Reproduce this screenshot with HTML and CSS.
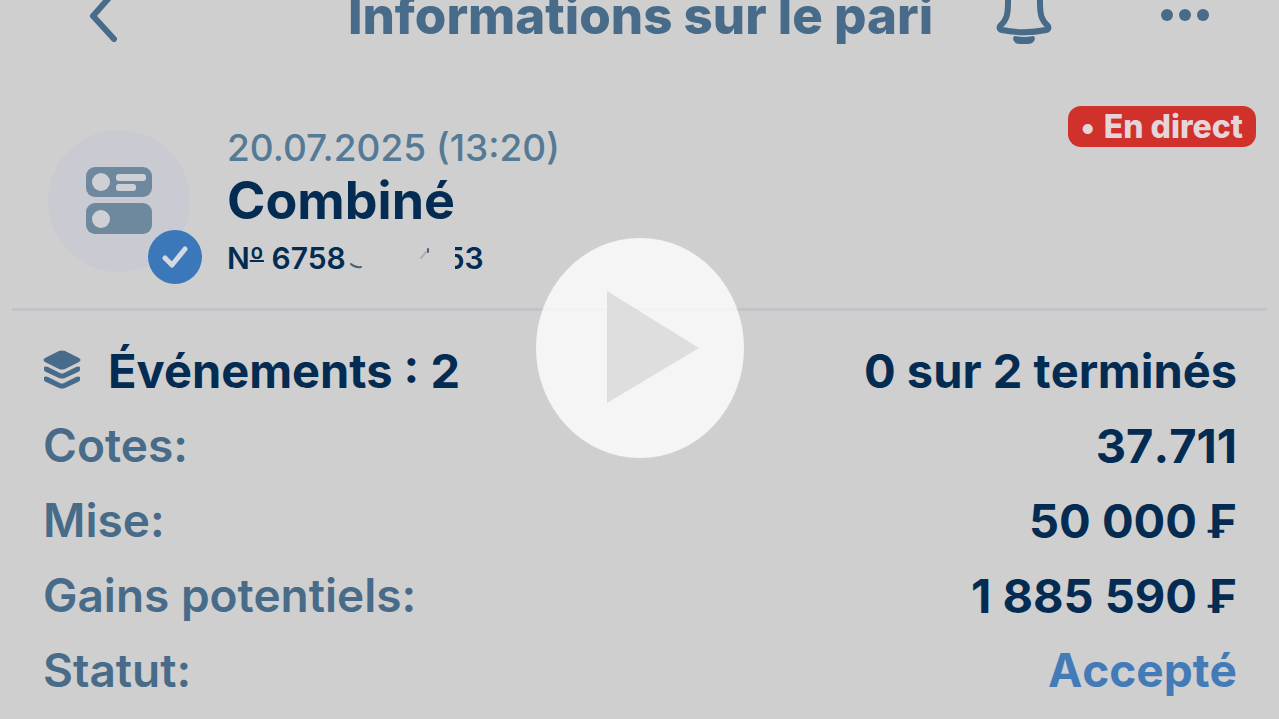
FILE: index.html
```html
<!DOCTYPE html>
<html lang="fr">
<head>
  <meta charset="UTF-8">
  <meta name="viewport" content="width=device-width, initial-scale=1.0">
  <title>Informations sur le pari</title>
  <link rel="stylesheet" href="styles.css">
</head>
<body>
  <header class="header">
    <button class="icon-btn back" type="button" aria-label="Retour">
      <svg width="32" height="56" viewBox="0 0 32 56"><path d="M27 3L5 28l21 23"/></svg>
    </button>
    <h1 class="title">Informations sur le pari</h1>
    <button class="icon-btn bell" type="button" aria-label="Notifications">
      <svg width="56" height="64" viewBox="0 0 56 64">
        <path d="M28 2c-10 0-16 6-16 16 0 12-1 18-8 24-1 2 0 4 2 4 15 3 29 3 44 0 2 0 3-2 2-4-7-6-8-12-8-24 0-10-6-16-16-16z"/>
        <path class="fill" d="M19 52q9 2 18 0c3 0 3 8-5 8h-8c-8 0-8-8-5-8z"/>
      </svg>
    </button>
    <button class="icon-btn more" type="button" aria-label="Plus">
      <svg width="48" height="12" viewBox="0 0 48 12">
        <circle class="fill" cx="6" cy="5" r="6"/>
        <circle class="fill" cx="24" cy="5" r="6"/>
        <circle class="fill" cx="42" cy="5" r="6"/>
      </svg>
    </button>
  </header>
  <main>
    <section class="bet">
      <div class="avatar">
        <svg width="66" height="68" viewBox="0 0 66 68">
          <rect class="card" width="66" height="30" rx="9"/>
          <rect class="card" y="36" width="66" height="31" rx="9"/>
          <circle class="hole" cx="15" cy="15" r="9"/>
          <circle class="hole" cx="15" cy="52" r="9"/>
          <rect class="hole" x="30" y="7" width="30" height="7" rx="3"/>
          <rect class="hole" x="30" y="17" width="20" height="7" rx="3"/>
        </svg>
        <span class="check">
          <svg width="26" height="22" viewBox="0 0 26 22"><path d="M3 12l7 7L23 3"/></svg>
        </span>
      </div>
      <div class="info">
        <p class="date">20.07.2025 (13:20)</p>
        <h2 class="type">Combiné</h2>
        <p class="number">N<span class="ordinal">º</span>&nbsp;6758<svg class="smudge" width="100" height="30" viewBox="0 0 100 30"><path d="M5 21q4 4 10 3"/><path class="light" d="M75 15l5-6"/><path d="M82 6v3"/></svg><span class="half">5</span>3</p>
      </div>
      <span class="live"><span>•</span> En direct</span>
    </section>
    <dl class="details">
      <div class="row head">
        <dt>
          <svg width="38" height="40" viewBox="0 0 38 40">
            <path d="M16 0q3-1 6 0l14 7q3 2 0 4l-14 7q-3 1-6 0L2 11q-3-2 0-4z"/>
            <path d="M1 16q2-1 4 0l12 6q2 1 4 0l12-6q2-1 4 0v3q0 1-2 2l-13 6q-3 1-6 0L3 21q-2-1-2-2z"/>
            <path d="M1 26q2-1 4 0l12 6q2 1 4 0l12-6q2-1 4 0v3q0 1-2 2l-13 6q-3 1-6 0L3 31q-2-1-2-2z"/>
          </svg>
          Événements : 2
        </dt>
        <dd>0 sur 2 terminés</dd>
      </div>
      <div class="row">
        <dt>Cotes:</dt>
        <dd>37.711</dd>
      </div>
      <div class="row">
        <dt>Mise:</dt>
        <dd>50 000 ₣</dd>
      </div>
      <div class="row">
        <dt>Gains potentiels:</dt>
        <dd>1 885 590 ₣</dd>
      </div>
      <div class="row">
        <dt>Statut:</dt>
        <dd class="accepted">Accepté</dd>
      </div>
    </dl>
  </main>
  <button class="play" type="button" aria-label="Lire la vidéo">
    <svg width="208" height="220" viewBox="0 0 208 220">
      <ellipse cx="104" cy="110" rx="104" ry="110"/>
      <path d="M71 53l92 57-92 55z"/>
    </svg>
  </button>
</body>
</html>
```
FILE: styles.css
```css
body,
h1,
h2,
p,
dl,
dt,
dd,
button {
  margin: 0;
  padding: 0;
}

body {
  position: relative;
  overflow: hidden;
  background: #cfcfcf;
  color: #042b52;
  font-family: Inter, "Liberation Sans", sans-serif;
}

svg {
  display: block;
  overflow: visible;
}

button {
  border: 0;
  background: none;
  cursor: pointer;
}

.header {
  display: flex;
  align-items: center;
  height: 32px;
  padding: 0 70px 0 88px;
  color: #476b88;
}
.icon-btn {
  color: inherit;
}
.icon-btn svg {
  fill: none;
  stroke: currentColor;
  stroke-width: 6;
  stroke-linecap: round;
  stroke-linejoin: round;
}
.icon-btn .fill {
  fill: currentColor;
  stroke: none;
}
.title {
  flex: 1;
  padding-left: 168px;
  text-align: center;
  white-space: nowrap;
  font-size: 51px;
  line-height: 32px;
  font-weight: 800;
}
.bell {
  margin: 0 109px 0 3px;
}

.bet {
  display: flex;
  align-items: flex-start;
  margin: 0 12px;
  padding: 74px 11px 24px 36px;
  border-bottom: 3px solid #c2c4ca;
}
.avatar {
  position: relative;
  display: flex;
  align-items: center;
  justify-content: center;
  width: 142px;
  height: 142px;
  margin-top: 24px;
  border-radius: 50%;
  background: #cacbd2;
}
.card {
  fill: #6e899d;
}
.hole {
  fill: #cfd0d5;
}
.check {
  position: absolute;
  right: -12px;
  bottom: -12px;
  display: flex;
  align-items: center;
  justify-content: center;
  width: 54px;
  height: 54px;
  border-radius: 50%;
  background: #3b78b9;
}
.check path {
  fill: none;
  stroke: #d3dae3;
  stroke-width: 5;
  stroke-linecap: round;
  stroke-linejoin: round;
}
.info {
  flex: 1;
  padding: 21px 0 0 37px;
}
.date {
  color: #557a95;
  font-size: 37px;
  line-height: 42px;
  font-weight: 500;
}
.type {
  font-size: 52px;
  line-height: 64px;
  font-weight: 700;
}
.number {
  display: flex;
  font-size: 30px;
  line-height: 51px;
  font-weight: 600;
}
.ordinal {
  text-decoration: underline;
  text-decoration-thickness: 2px;
  text-decoration-skip-ink: none;
  text-underline-offset: -9px;
}
.smudge {
  margin-top: 10px;
  fill: none;
  stroke: #4b6177;
  stroke-width: 2;
  stroke-linecap: round;
}
.smudge .light {
  stroke: #aab0b5;
}
/* the left part of this digit is hidden */
.half {
  position: relative;
}
.half::before {
  content: "";
  position: absolute;
  left: 0;
  top: 0;
  width: 9px;
  height: 50px;
  background: #cfcfcf;
}
.live {
  display: flex;
  gap: 9px;
  padding: 0 13px;
  border-radius: 13px;
  background: #d0312b;
  color: #e5d5da;
  font-size: 32px;
  line-height: 41px;
  font-weight: 800;
}

.details {
  padding: 22px 42px 0 43px;
}
.row {
  display: flex;
  justify-content: space-between;
  font-size: 47px;
  line-height: 75px;
}
.row dt {
  color: #476b88;
  font-size: 46px;
  font-weight: 600;
}
.row dd {
  font-weight: 700;
  font-kerning: none;
}
.row .accepted {
  color: #427bb7;
  font-size: 46px;
}
.row.head dt {
  display: flex;
  align-items: center;
  gap: 27px;
  color: #042b52;
  font-size: 47px;
  font-weight: 700;
}
.head svg {
  fill: #476b88;
}

.play {
  position: absolute;
  top: 238px;
  left: 50%;
  transform: translateX(-50%);
}
.play ellipse {
  fill: #fff;
  fill-opacity: .78;
}
.play path {
  fill: #c8c8c8;
  fill-opacity: .5;
}
```
